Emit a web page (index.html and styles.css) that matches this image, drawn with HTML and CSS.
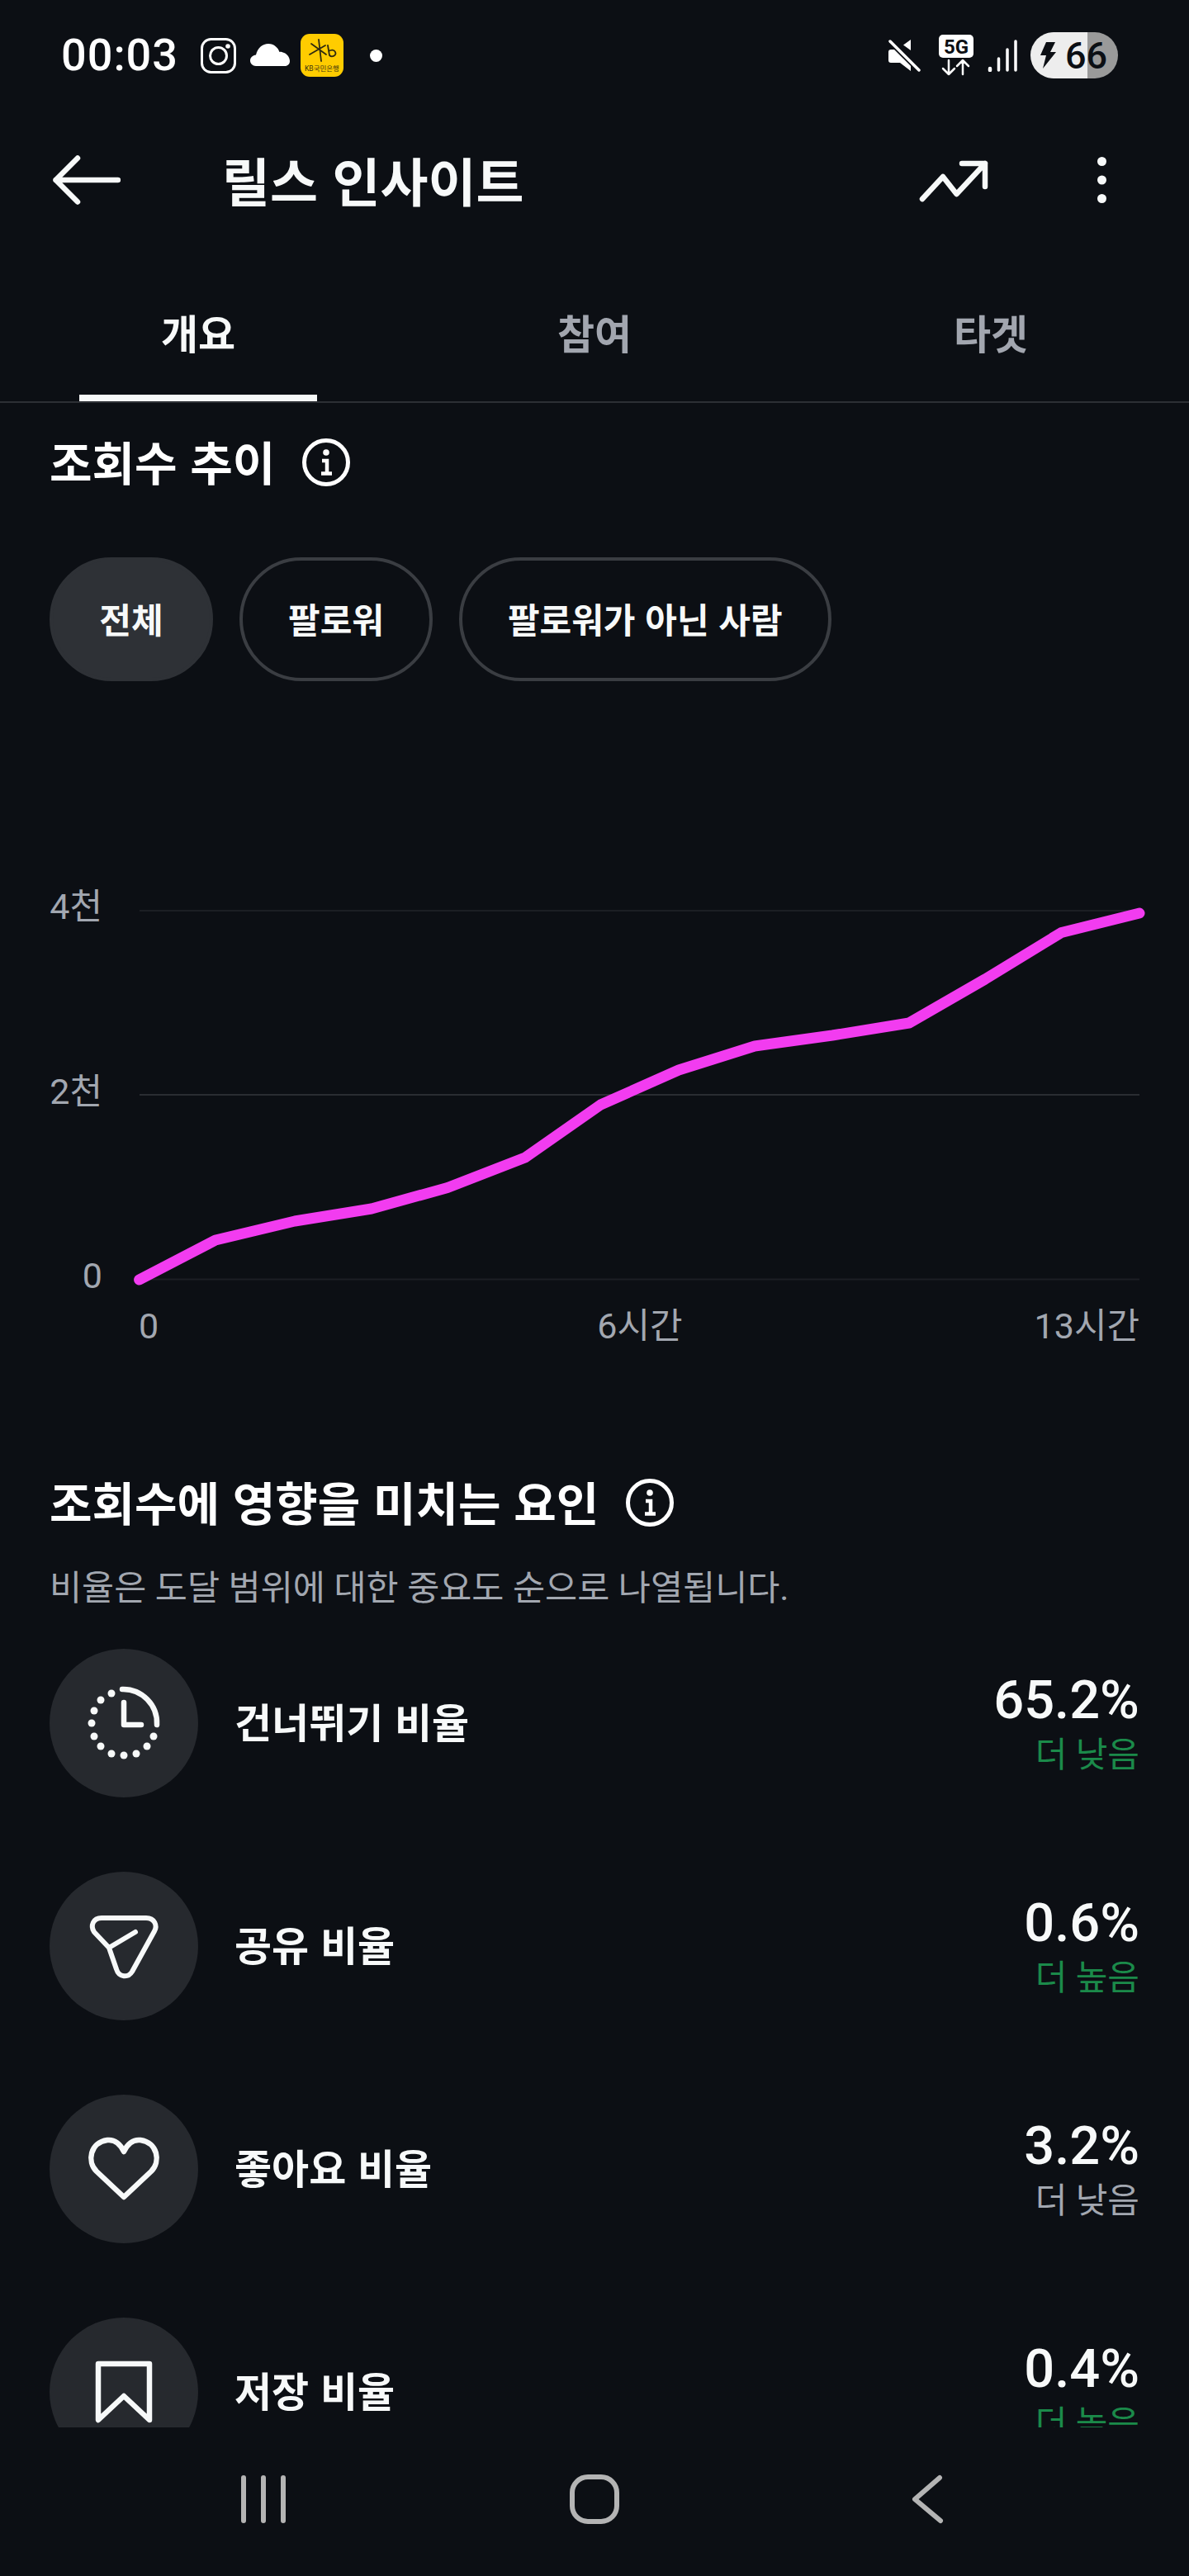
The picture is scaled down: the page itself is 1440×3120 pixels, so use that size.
FILE: index.html
```html
<!DOCTYPE html>
<html lang="ko">
<head>
<meta charset="utf-8">
<title>릴스 인사이트</title>
<link rel="stylesheet" href="styles.css">
</head>
<body>
<div class="phone">
  <div class="status">
    <span class="time">00:03</span>
    <svg class="ic-ig" viewBox="0 0 43 43"><rect x="1.5" y="1.5" width="40" height="40" rx="11" fill="none" stroke="#fff" stroke-width="3"/><circle cx="21.5" cy="21.5" r="10" fill="none" stroke="#fff" stroke-width="3"/><circle cx="33" cy="10" r="2.8" fill="#fff"/></svg>
    <svg class="ic-cloud" viewBox="0 0 48 27"><path fill="#fff" d="M7 27C3 27 0 24 0 20.500C0 16.500 3 14 7 13.500C9 5 15 0 22 0C29 0 34 5 35.500 10C37 9.700 38.500 9.500 39.500 10.500C44 11.500 48 16 48 21C48 24.500 45.500 27 42 27Z"/></svg>
    <div class="ic-kb">
      <svg viewBox="0 0 52 52"><g fill="none" stroke="#2f2a10" stroke-width="1.800" stroke-linecap="round"><path d="M13 12L31 25M11 25L30 14M22 7L25 33"/><path d="M33 14L35 26C38 29 44 26 42 22C41 19 37 19 34 21"/></g></svg>
      <span class="kb-text">KB국민은행</span>
    </div>
    <span class="dot"></span>
    <svg class="ic-mute" viewBox="0 0 40 40"><path fill="#fff" d="M28 1V14L19 7.500ZM1 16Q1 13 4 13H11L28 30V39L15 29H4Q1 29 1 26Z"/><path d="M3 3L38 38" stroke="#0c0f14" stroke-width="7"/><path d="M3 3L38 38" stroke="#fff" stroke-width="3.500" stroke-linecap="round"/></svg>
    <svg class="ic-5g" viewBox="0 0 42 50"><rect width="42" height="28" rx="5" fill="#fff"/><text x="21" y="23" text-anchor="middle" class="fiveg">5G</text><g fill="none" stroke="#fff" stroke-width="2.500" stroke-linecap="round" stroke-linejoin="round"><path d="M12 31V48M5 41L12 48L19 41M29 48V31M22 38L29 31L36 38"/></g></svg>
    <svg class="ic-signal" viewBox="0 0 37 40"><g stroke="#fff" stroke-linecap="round"><path d="M3 36V38" stroke-width="4.500"/><path d="M13.500 24V38" stroke-width="3.500"/><path d="M24 13V38" stroke-width="3.500"/><path d="M34 3V38" stroke-width="3.500"/></g></svg>
    <div class="battery">
      <svg class="ic-bolt" viewBox="0 0 20 32"><path fill="#0c0f14" d="M8 0H19L13 12H20L4 32L8 16H1Z"/></svg>
      <span class="bat-num">66</span>
    </div>
  </div>

  <header class="appbar">
    <svg class="ic-back" viewBox="0 0 82 60"><path d="M30 3.500L3.500 30L30 56.500M3.500 30H79" fill="none" stroke="#f7f9f9" stroke-width="6.500" stroke-linecap="round" stroke-linejoin="round"/></svg>
    <h1 class="title">릴스 인사이트</h1>
    <svg class="ic-trend" viewBox="0 0 86 56"><path d="M5 51L30 24L46.500 45L81 8M53 8H81V36" fill="none" stroke="#f7f9f9" stroke-width="6.500" stroke-linecap="round" stroke-linejoin="round"/></svg>
    <svg class="ic-more" viewBox="0 0 11 56"><circle cx="5.500" cy="5.500" r="5.500" fill="#f7f9f9"/><circle cx="5.500" cy="28" r="5.500" fill="#f7f9f9"/><circle cx="5.500" cy="50.500" r="5.500" fill="#f7f9f9"/></svg>
  </header>

  <nav class="tabs">
    <div class="tab tab-on"><span>개요</span></div>
    <div class="tab"><span>참여</span></div>
    <div class="tab"><span>타겟</span></div>
  </nav>

  <main class="scroll">
    <div class="sec-head first">
      <h2>조회수 추이</h2>
      <svg class="ic-info" viewBox="0 0 58 58"><circle cx="29" cy="29" r="26.500" fill="none" stroke="#fff" stroke-width="5"/><circle cx="29" cy="17" r="3.800" fill="#fff"/><path d="M24 27H30V42M23 42.500H36" fill="none" stroke="#fff" stroke-width="4.500"/></svg>
    </div>
    <div class="pills">
      <span class="pill pill-on">전체</span>
      <span class="pill">팔로워</span>
      <span class="pill">팔로워가 아닌 사람</span>
    </div>

    <svg class="chart" viewBox="0 1050 1440 600">
      <path class="grid" d="M169 1103H1380M169 1549.500H1380"/>
      <path class="grid grid-mid" d="M169 1326H1380"/>
      <text class="axis" x="124" y="1113" text-anchor="end">4천</text>
      <text class="axis" x="124" y="1337" text-anchor="end">2천</text>
      <text class="axis" x="124" y="1560" text-anchor="end">0</text>
      <text class="axis" x="168" y="1621">0</text>
      <text class="axis" x="775" y="1621" text-anchor="middle">6시간</text>
      <text class="axis" x="1380" y="1621" text-anchor="end">13시간</text>
      <polyline class="line" points="168.600,1550 261,1502 357,1479 450,1464 542,1438.500 636,1402 727.500,1338 822,1296 914,1267 1008,1254 1101,1239 1193,1186 1285.500,1129.500 1380,1106"/>
    </svg>

    <div class="sec-head second">
      <h2>조회수에 영향을 미치는 요인</h2>
      <svg class="ic-info" viewBox="0 0 58 58"><circle cx="29" cy="29" r="26.500" fill="none" stroke="#fff" stroke-width="5"/><circle cx="29" cy="17" r="3.800" fill="#fff"/><path d="M24 27H30V42M23 42.500H36" fill="none" stroke="#fff" stroke-width="4.500"/></svg>
    </div>
    <p class="sub">비율은 도달 범위에 대한 중요도 순으로 나열됩니다.</p>

    <div class="rows">
      <div class="row">
        <div class="badge">
          <svg viewBox="-50 -50 100 100"><g fill="none" stroke="#f7f9f9" stroke-width="6.500" stroke-linecap="round" stroke-linejoin="round"><path d="M-2 -41A41 41 0 0 1 40 2"/><path d="M0 -25V2H21"/></g><g fill="#f7f9f9"><circle cx="-15" cy="-36" r="4.500"/><circle cx="-28" cy="-28" r="4.500"/><circle cx="-36" cy="-15" r="4.500"/><circle cx="-39" cy="0" r="4.500"/><circle cx="-36" cy="16" r="4.500"/><circle cx="-28" cy="28" r="4.500"/><circle cx="-15" cy="37" r="4.500"/><circle cx="0" cy="39" r="4.500"/><circle cx="15" cy="37" r="4.500"/><circle cx="28" cy="28" r="4.500"/><circle cx="36" cy="16" r="4.500"/></g></svg>
        </div>
        <span class="label">건너뛰기 비율</span>
        <div class="stat"><span class="val">65.2%</span><span class="cmp good">더 낮음</span></div>
      </div>
      <div class="row">
        <div class="badge">
          <svg viewBox="-50 -50 100 100"><path d="M-27 -34H27C37 -34 41 -25 37 -18L10 31C5 39 -6 38 -9 28L-18 2L-36 -17C-41 -25 -37 -34 -27 -34ZM-18 2L14 -17" fill="none" stroke="#f7f9f9" stroke-width="6" stroke-linecap="round" stroke-linejoin="round"/></svg>
        </div>
        <span class="label">공유 비율</span>
        <div class="stat"><span class="val">0.6%</span><span class="cmp good">더 높음</span></div>
      </div>
      <div class="row">
        <div class="badge">
          <svg viewBox="-50 -50 100 100"><path d="M0 34L-33 3C-45 -9 -41 -32 -20 -35C-11 -36 -4 -30 0 -21C4 -30 11 -36 20 -35C41 -32 45 -9 33 3Z" fill="none" stroke="#f7f9f9" stroke-width="6.500" stroke-linejoin="round"/></svg>
        </div>
        <span class="label">좋아요 비율</span>
        <div class="stat"><span class="val">3.2%</span><span class="cmp">더 낮음</span></div>
      </div>
      <div class="row">
        <div class="badge">
          <svg viewBox="-50 -50 100 100"><path d="M-31 -34H31V34L0 5L-31 34Z" fill="none" stroke="#f7f9f9" stroke-width="6.500" stroke-linejoin="round"/></svg>
        </div>
        <span class="label">저장 비율</span>
        <div class="stat"><span class="val">0.4%</span><span class="cmp good">더 높음</span></div>
      </div>
    </div>
  </main>

  <footer class="navbar">
    <svg class="nav-ic" viewBox="0 0 60 60"><path d="M6 4V56M30 4V56M54 4V56" stroke="#b4b4b4" stroke-width="6" stroke-linecap="round"/></svg>
    <svg class="nav-ic" viewBox="0 0 60 60"><rect x="3" y="3" width="54" height="54" rx="19" fill="none" stroke="#b4b4b4" stroke-width="6"/></svg>
    <svg class="nav-ic" viewBox="0 0 60 60"><path d="M47 4L17 30L48 56" fill="none" stroke="#b4b4b4" stroke-width="6" stroke-linecap="round" stroke-linejoin="round"/></svg>
  </footer>
</div>
</body>
</html>
```

FILE: styles.css
```css
* { box-sizing: border-box; }
html, body { margin: 0; padding: 0; background: #0c0f14; }
body { font-family: Roboto, "Noto Sans CJK KR", sans-serif; color: #f7f9f9; }
h1, h2, p { margin: 0; }

.phone { width: 1440px; height: 3120px; display: flex; flex-direction: column; overflow: hidden; background: #0c0f14; }

/* status bar */
.status { height: 134px; flex: none; display: flex; align-items: center; padding: 0 86px 0 74px; }
.time { width: 141px; font-size: 54px; font-weight: 500; letter-spacing: 1px; color: #fff; line-height: 1; white-space: nowrap; }
.ic-ig { width: 43px; height: 43px; margin-left: 28px; }
.ic-cloud { width: 48px; height: 27px; margin-left: 17px; margin-top: -1px; }
.ic-kb { width: 52px; height: 52px; margin-left: 13px; border-radius: 11px; background: #ffcc00; position: relative; overflow: hidden; }
.ic-kb svg { width: 52px; height: 52px; display: block; }
.kb-text { position: absolute; left: 0; right: 0; bottom: 5px; text-align: center; font-size: 8.500px; line-height: 10px; color: #3a3210; white-space: nowrap; }
.dot { width: 15px; height: 15px; border-radius: 50%; background: #fff; margin-left: 32px; margin-right: auto; }
.ic-mute { width: 40px; height: 40px; }
.ic-5g { width: 42px; height: 50px; margin-left: 22px; }
.fiveg { font-family: Roboto, sans-serif; font-size: 24px; font-weight: 700; fill: #0c0f14; }
.ic-signal { width: 37px; height: 40px; margin-left: 17px; }
.battery { width: 106px; height: 56px; margin-left: 15px; border-radius: 28px; background: linear-gradient(90deg, #ededed 65%, #9a9a9a 65%); display: flex; align-items: center; padding-left: 11px; }
.ic-bolt { width: 20px; height: 32px; }
.bat-num { font-size: 45px; font-weight: 500; color: #0c0f14; margin-left: 11px; line-height: 1; }

/* app bar */
.appbar { height: 168px; flex: none; display: flex; align-items: center; padding: 0 100px 0 64px; }
.ic-back { width: 82px; height: 60px; }
.title { margin-left: 123px; padding-bottom: 4px; font-family: "Noto Sans CJK KR", sans-serif; font-size: 63px; font-weight: 700; line-height: 1; }
.ic-trend { width: 86px; height: 56px; margin-left: auto; }
.ic-more { width: 11px; height: 56px; margin-left: 131px; }

/* tabs */
.tabs { height: 186px; flex: none; display: flex; border-bottom: 2px solid #2d3035; }
.tab { flex: 1; display: flex; justify-content: center; padding-top: 72px; font-family: "Noto Sans CJK KR", sans-serif; font-size: 49px; font-weight: 700; line-height: 56px; color: #a2a6af; }
.tab span { width: 288px; height: 112px; text-align: center; position: relative; }
.tab-on { color: #f7f9f9; }
.tab-on span::after { content: ""; position: absolute; left: 0; right: 0; bottom: 0; height: 8px; background: #f7f9f9; }

/* scroll */
.scroll { flex: 1; min-height: 0; overflow: hidden; padding: 0 60px; }
.sec-head { display: flex; align-items: center; gap: 33px; height: 58px; }
.sec-head.first { margin-top: 43px; }
.sec-head.second { margin-top: 141px; }
.sec-head h2 { padding-bottom: 4px; font-family: "Noto Sans CJK KR", sans-serif; font-size: 56px; font-weight: 700; line-height: 58px; white-space: nowrap; color: #fff; }
.ic-info { width: 58px; height: 58px; flex: none; }

.pills { display: flex; gap: 32px; margin-top: 86px; }
.pill { min-width: 198px; height: 150px; border-radius: 75px; border: 4px solid #3a3d42; padding: 0 55px 4px; display: flex; align-items: center; justify-content: center; font-family: "Noto Sans CJK KR", sans-serif; font-size: 42px; font-weight: 700; white-space: nowrap; }
.pill-on { background: #2e3136; border-color: #2e3136; }

.chart { display: block; width: 1440px; height: 600px; margin: 225px 0 0 -60px; }
.grid { stroke: #1c1f24; stroke-width: 2; fill: none; }
.grid-mid { stroke: #2a2d32; }
.axis { font-family: Roboto, "Noto Sans CJK KR", sans-serif; font-size: 43px; fill: #a2a7b0; }
.line { fill: none; stroke: #f23cf0; stroke-width: 13; stroke-linecap: round; stroke-linejoin: round; }

.sub { margin-top: 46px; font-family: Roboto, "Noto Sans CJK KR", sans-serif; font-size: 42.500px; line-height: 58px; color: #a2a7b0; white-space: nowrap; }

.rows { display: flex; flex-direction: column; gap: 90px; margin-top: 44px; }
.row { display: flex; align-items: center; height: 180px; flex: none; }
.badge { width: 180px; height: 180px; border-radius: 50%; background: #26292e; display: flex; align-items: center; justify-content: center; flex: none; }
.badge svg { width: 100px; height: 100px; display: block; }
.label { margin-left: 44px; padding-bottom: 8px; flex: 1; font-family: "Noto Sans CJK KR", sans-serif; font-size: 49px; font-weight: 700; white-space: nowrap; }
.stat { display: flex; flex-direction: column; align-items: flex-end; padding-top: 4px; }
.val { font-size: 65px; font-weight: 500; line-height: 74px; color: #f7f9f9; }
.cmp { font-size: 42px; line-height: 60px; color: #a2a7b0; }
.good { color: #1b8a4a; }

/* navigation bar */
.navbar { height: 180px; flex: none; display: grid; grid-template-columns: repeat(3, 1fr); justify-items: center; align-items: center; padding: 0 118px 6px; background: #0c0f14; }
.nav-ic { width: 60px; height: 60px; }
```
